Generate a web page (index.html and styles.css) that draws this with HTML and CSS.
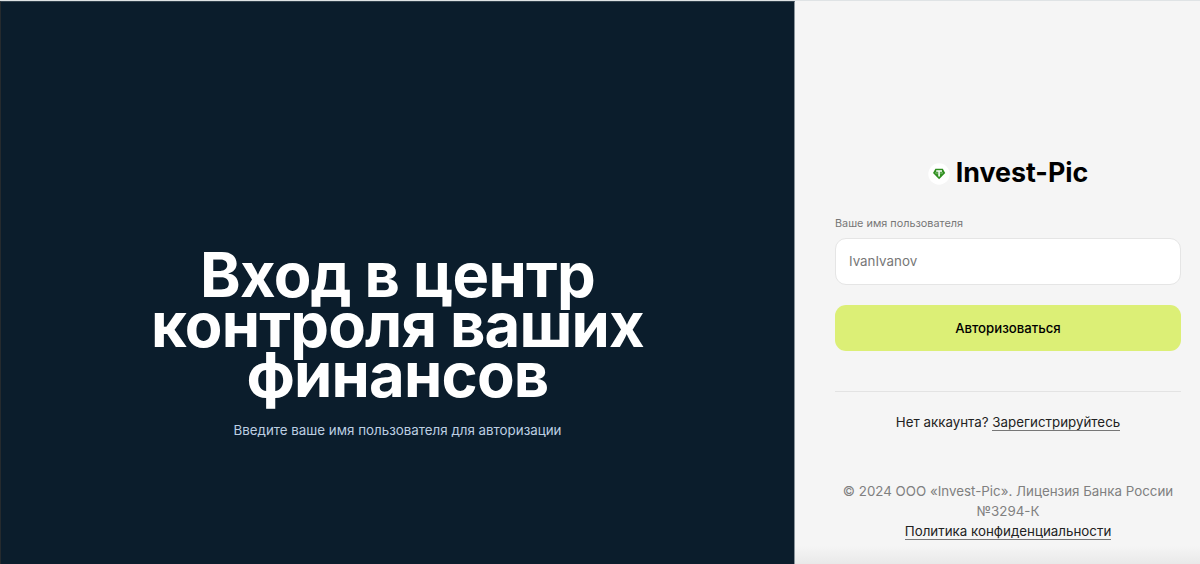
FILE: index.html
```html
<!doctype html>
<html lang="ru">
<head>
    <meta charset="utf-8">
    <meta name="viewport" content="width=device-width, initial-scale=1.0">
    <title>Invest-Pic</title>
    <link rel="stylesheet" href="styles.css">
</head>
<body>
    <div class="page">
        <div class="promo">
            <h1>Вход в центр контроля ваших финансов</h1>
            <p>Введите ваше имя пользователя для авторизации</p>
        </div>
        <div class="login">
            <div class="logo">
                <svg class="logo-icon" viewBox="0 0 22 22">
                    <circle cx="11" cy="11" r="10.7" fill="#fff"/>
                    <path d="M7.4 5.7h7.4l2.4 4.2-6.1 6.3-6.1-6.3z" fill="#2f8f1f"/>
                    <path d="M8.2 7.2h5.8v1.5h-2.1v4.9h-1.6V8.7H8.2z" fill="#fff"/>
                    <ellipse cx="11.1" cy="9.9" rx="3.9" ry="0.9" fill="none" stroke="#c5e3bf" stroke-width="0.4"/>
                </svg>
                <span class="logo-text">Invest-Pic</span>
            </div>
            <form id="login-form">
                <label for="username">Ваше имя пользователя</label>
                <input type="text" id="username" placeholder="IvanIvanov" required>
                <button type="submit">Авторизоваться</button>
            </form>
            <div class="register">Нет аккаунта? <a href="#">Зарегистрируйтесь</a></div>
            <div class="footer">
                © 2024 ООО «Invest-Pic». Лицензия Банка России №3294-К<br>
                <a href="#">Политика конфиденциальности</a>
            </div>
        </div>
    </div>
</body>
</html>
```
FILE: styles.css
```css
* {
    box-sizing: border-box;
}
body {
    font-family: Inter, "Liberation Sans", sans-serif;
    font-size: 13.35px;
    background-color: #f5f5f5;
    margin: 0;
}
.page {
    display: flex;
    height: 564px;
    overflow: hidden;
    border-top: 1px solid #dfe3e5;
}
.promo {
    width: 795px;
    background-color: #0b1d2c;
    border-left: 1px solid #252a2e;
    border-right: 1px solid #8a949b;
    border-top: 1px solid #33434f;
    padding: 248px 140px 0;
    text-align: center;
}
.promo h1 {
    margin: 0;
    color: #fff;
    font-size: 61.5px;
    font-weight: 700;
    line-height: 50px;
    letter-spacing: -0.8px;
}
.promo p {
    margin: 20px 0 0;
    color: #bdcfe2;
    line-height: 20px;
}
.login {
    width: 405px;
    padding: 154px 19px 0 40px;
    background: linear-gradient(#f5f5f5 545px, #e9e9e9 563px);
}
.logo {
    display: flex;
    align-items: center;
    justify-content: center;
    height: 34px;
    gap: 6px;
}
.logo-icon {
    width: 22px;
    height: 22px;
    margin-top: 4px;
}
.logo-text {
    font-size: 26.8px;
    font-weight: 700;
    color: #000;
}
.login label {
    display: block;
    margin-top: 26px;
    color: #777;
    font-size: 10.85px;
    line-height: 16px;
}
.login input {
    display: block;
    width: 100%;
    height: 47px;
    margin-top: 7px;
    padding: 0 13px 1px;
    border: 1px solid #e5e5e5;
    border-radius: 11px;
    background-color: #fff;
    font-family: inherit;
    font-size: 13.35px;
}
.login input::placeholder {
    color: #777;
}
.login button {
    display: block;
    width: 100%;
    height: 46px;
    margin-top: 20px;
    border: none;
    border-radius: 11px;
    background-color: #dcef76;
    color: #000;
    font-family: inherit;
    font-size: 13.2px;
    font-weight: 500;
    cursor: pointer;
}
.register {
    margin-top: 40px;
    padding-top: 20px;
    border-top: 1px solid #e3e3e3;
    color: #222;
    line-height: 20px;
    text-align: center;
}
.login a {
    color: #222;
    text-decoration: none;
    border-bottom: 1px solid #777;
}
.footer {
    margin-top: 49px;
    color: #808080;
    line-height: 20px;
    text-align: center;
}
```
